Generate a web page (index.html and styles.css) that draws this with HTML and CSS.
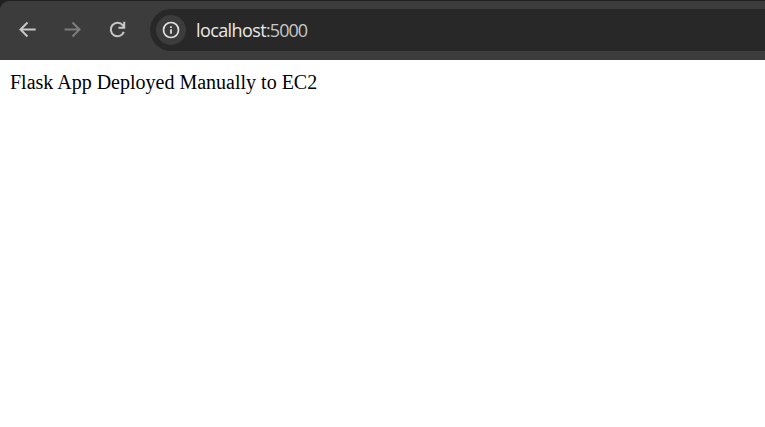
FILE: index.html
```
<!DOCTYPE html>
<html lang="en">
<head>
<meta charset="utf-8">
<title>localhost:5000</title>
<link rel="stylesheet" href="styles.css">
</head>
<body>
<div class="frame">
  <header class="toolbar">
    <nav class="nav">
      <svg class="icon" viewBox="0 0 24 24"><path d="M20.5 12H5.4M12 4.7L4.7 12l7.3 7.3"/></svg>
      <svg class="icon disabled" viewBox="0 0 24 24"><path d="M3.7 12h14.9M12 4.7l7.3 7.3-7.3 7.3"/></svg>
      <svg class="icon" viewBox="0 0 24 24"><path d="M18.6 14.4A7 7 0 1 1 17.6 7.8L19 9.6M19 4v6.2h-6"/></svg>
    </nav>
    <div class="address">
      <span class="info"><svg viewBox="0 0 18 18"><circle cx="9" cy="9" r="7.5"/><path d="M9 8.2v4.6M9 5.2v1.8"/></svg></span>
      <span class="url">localhost<span class="port">:5000</span></span>
    </div>
  </header>
</div>
<main class="page">Flask App Deployed Manually to EC2</main>
</body>
</html>
```
FILE: styles.css
```
body {
  margin: 0;
  background: #fff;
}

.frame {
  height: 60px;
  padding-top: 1px;
  box-sizing: border-box;
  background: #202020;
}

.toolbar {
  display: flex;
  height: 59px;
  padding-top: 8px;
  box-sizing: border-box;
  background: #3c3c3c;
  border-radius: 9px 0 0 0;
}

.nav {
  display: flex;
  align-items: center;
  gap: 22px;
  width: 134px;
  height: 41px;
  padding-left: 16px;
}

.icon {
  width: 23px;
  height: 23px;
  fill: none;
  stroke: #c7c7c7;
  stroke-width: 2.1;
}

.disabled {
  stroke: #7d7d7d;
}

.address {
  display: flex;
  align-items: center;
  flex: 1;
  height: 42px;
  padding-left: 6px;
  box-sizing: border-box;
  background: #282828;
  border-radius: 21px 0 0 21px;
}

.info {
  display: flex;
  align-items: center;
  justify-content: center;
  width: 30px;
  height: 30px;
  border-radius: 50%;
  background: #3c3c3c;
}

.info svg {
  width: 18px;
  height: 18px;
  fill: none;
  stroke: #e3e3e3;
  stroke-width: 1.7;
}

.url {
  margin-left: 10px;
  font: 18px/24px "Open Sans", "Noto Sans", sans-serif;
  letter-spacing: -0.6px;
  color: #e8e8e8;
}

.port {
  letter-spacing: -0.95px;
  color: #c7c7c7;
}

.page {
  padding: 11px 10px;
  font: 20px/23px "Liberation Serif", serif;
  color: #000;
}
```
